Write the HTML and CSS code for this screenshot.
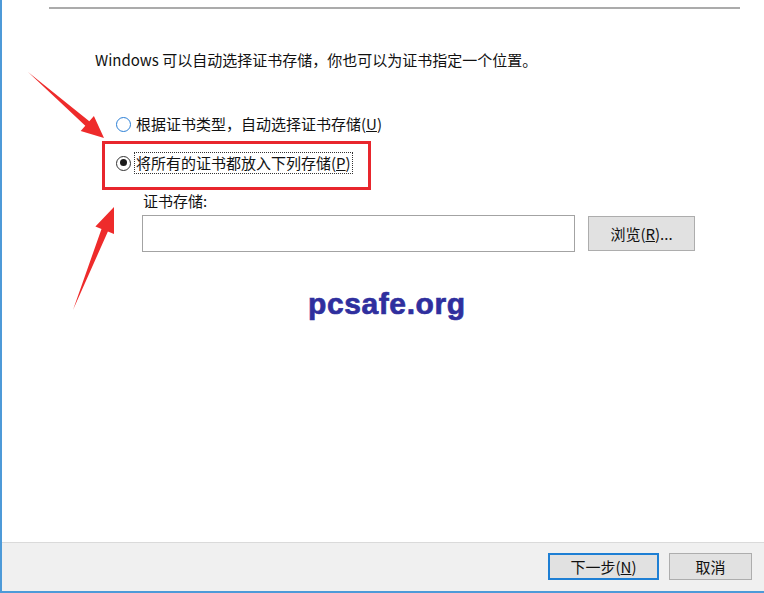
FILE: index.html
```html
<!DOCTYPE html>
<html lang="zh-CN">
<head>
<meta charset="utf-8">
<title>证书导入向导</title>
<link rel="stylesheet" href="styles.css">
</head>
<body>
<div class="dialog">
  <div class="main">
    <div class="sep"></div>
    <p class="intro">Windows 可以自动选择证书存储，你也可以为证书指定一个位置。</p>
    <div class="radio-row first">
      <span class="radio"></span>
      <span class="radio-label">根据证书类型，自动选择证书存储(<u>U</u>)</span>
    </div>
    <div class="radio-row second">
      <span class="radio checked"></span>
      <span class="radio-label focus">将所有的证书都放入下列存储(<u>P</u>)</span>
    </div>
    <div class="field-label">证书存储:</div>
    <div class="field-row">
      <div class="input"></div>
      <div class="btn browse">浏览(<u>R</u>)...</div>
    </div>
    <div class="watermark">pcsafe.org</div>
  </div>
  <div class="footer">
    <div class="btn primary">下一步(<u>N</u>)</div>
    <div class="btn cancel">取消</div>
  </div>
  <div class="highlight"></div>
  <svg class="arrows" width="764" height="593" viewBox="0 0 764 593">
    <polygon points="28,72 89.3,121.2 93.9,116 104,138 80.7,131 85.3,125.8" fill="#ee2b2b"/>
    <polygon points="73,310 101.5,228.9 95.4,226.5 114,207 114,233.9 107.9,231.5" fill="#ee2b2b"/>
  </svg>
</div>
</body>
</html>
```
FILE: styles.css
```css
html, body {
  margin: 0;
  padding: 0;
  background: #fff;
}

.dialog {
  position: relative;
  width: 764px;
  height: 593px;
  box-sizing: border-box;
  border-left: 2px solid #4d9ad8;
  border-bottom: 2px solid #4d9ad8;
  display: flex;
  flex-direction: column;
  background: #fff;
  font-family: "Noto Sans CJK SC", "Noto Sans", sans-serif;
  font-size: 15px;
  color: #111;
  overflow: hidden;
}

.main {
  flex: 1;
  padding-top: 7px;
}

.sep {
  margin-left: 47px;
  width: 691px;
  height: 2px;
  background: #ababab;
}

.intro {
  margin: 41px 0 0 93px;
  line-height: 20px;
}

.radio-row {
  display: flex;
  align-items: center;
  margin-left: 114px;
  height: 20px;
}

.radio-row.first {
  margin-top: 44px;
}

.radio-row.second {
  margin-top: 19px;
}

.radio {
  width: 15px;
  height: 15px;
  box-sizing: border-box;
  border: 1.5px solid #2b7fd6;
  border-radius: 50%;
  background: #fff;
  margin-right: 5px;
  position: relative;
  flex: none;
}

.radio.checked {
  border-color: #333;
}

.radio.checked::after {
  content: "";
  position: absolute;
  left: 2.5px;
  top: 2.5px;
  width: 7px;
  height: 7px;
  border-radius: 50%;
  background: #1a1a1a;
}

.radio-label {
  line-height: 20px;
  white-space: nowrap;
}

.radio-label.focus {
  outline: 1px dotted #333;
  outline-offset: 0;
  margin-left: -1px;
  padding: 0 1px;
}

.field-label {
  margin: 18px 0 0 141px;
  line-height: 20px;
}

.field-row {
  display: flex;
  align-items: flex-start;
  margin: 4px 0 0 140px;
}

.input {
  width: 433px;
  height: 37px;
  box-sizing: border-box;
  border: 1px solid #a3a3a3;
  background: #fff;
}

.btn {
  box-sizing: border-box;
  display: flex;
  align-items: center;
  justify-content: center;
  background: #e1e1e1;
  border: 1px solid #adadad;
  line-height: 20px;
  white-space: nowrap;
}

.browse {
  margin: 1px 0 0 13px;
  width: 107px;
  height: 35px;
}

.watermark {
  margin: 34px 0 0 306px;
  font-family: "Liberation Sans", Arial, sans-serif;
  font-weight: bold;
  font-size: 30px;
  line-height: 36px;
  letter-spacing: 0.6px;
  color: #2f2f9e;
  -webkit-text-stroke: 0.7px #2f2f9e;
}

.footer {
  height: 49px;
  box-sizing: border-box;
  border-top: 1px solid #dadada;
  background: #f0f0f0;
  display: flex;
  justify-content: flex-end;
  align-items: flex-start;
  gap: 10px;
  padding: 10px 12px 0 0;
}

.primary {
  width: 111px;
  height: 27px;
  border: 2px solid #1e7fd4;
}

.cancel {
  width: 83px;
  height: 27px;
}

.highlight {
  position: absolute;
  left: 100px;
  top: 141px;
  width: 269px;
  height: 49px;
  box-sizing: border-box;
  border: 3px solid #e8262d;
}

.arrows {
  position: absolute;
  left: -2px;
  top: 0;
  pointer-events: none;
}
```
